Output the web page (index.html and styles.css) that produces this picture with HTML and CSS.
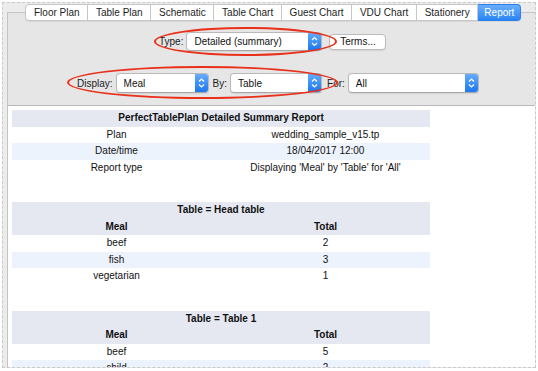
FILE: index.html
```html
<!DOCTYPE html>
<html>
<head>
<meta charset="utf-8">
<link rel="stylesheet" href="styles.css">
</head>
<body>
<div class="frame">
  <div class="tabs">
    <div class="tab first">Floor Plan</div>
    <div class="tab">Table Plan</div>
    <div class="tab">Schematic</div>
    <div class="tab">Table Chart</div>
    <div class="tab">Guest Chart</div>
    <div class="tab">VDU Chart</div>
    <div class="tab">Stationery</div>
    <div class="tab active">Report</div>
  </div>
  <div class="pane">
    <div class="row row-type">
      <span class="lbl">Type:</span>
      <div class="select w-type"><span class="val">Detailed (summary)</span><span class="stepper"><svg width="13" height="17" viewBox="0 0 13 17"><path d="M4 7 L6.5 4.5 L9 7 M4 10 L6.5 12.5 L9 10" fill="none" stroke="#fff" stroke-width="1.2"/></svg></span></div>
      <div class="button">Terms...</div>
    </div>
    <div class="row row-display">
      <span class="lbl">Display:</span>
      <div class="select w-meal"><span class="val">Meal</span><span class="stepper"><svg width="13" height="18" viewBox="0 0 13 18"><path d="M4 7.5 L6.5 5 L9 7.5 M4 10.5 L6.5 13 L9 10.5" fill="none" stroke="#fff" stroke-width="1.2"/></svg></span></div>
      <span class="lbl lbl-by">By:</span>
      <div class="select w-table"><span class="val">Table</span><span class="stepper"><svg width="13" height="18" viewBox="0 0 13 18"><path d="M4 7.5 L6.5 5 L9 7.5 M4 10.5 L6.5 13 L9 10.5" fill="none" stroke="#fff" stroke-width="1.2"/></svg></span></div>
      <span class="lbl lbl-for">For:</span>
      <div class="select w-all"><span class="val">All</span><span class="stepper"><svg width="13" height="18" viewBox="0 0 13 18"><path d="M4 7.5 L6.5 5 L9 7.5 M4 10.5 L6.5 13 L9 10.5" fill="none" stroke="#fff" stroke-width="1.2"/></svg></span></div>
    </div>
    <div class="report">
      <table class="rt">
        <tr class="hd"><td colspan="2" class="b">PerfectTablePlan Detailed Summary Report</td></tr>
        <tr><td>Plan</td><td>wedding_sample_v15.tp</td></tr>
        <tr class="alt"><td>Date/time</td><td>18/04/2017 12:00</td></tr>
        <tr><td>Report type</td><td>Displaying 'Meal' by 'Table' for 'All'</td></tr>
      </table>
      <table class="rt">
        <tr class="hd"><td colspan="2" class="b">Table = Head table</td></tr>
        <tr class="hd"><td class="b">Meal</td><td class="b">Total</td></tr>
        <tr><td>beef</td><td>2</td></tr>
        <tr class="alt"><td>fish</td><td>3</td></tr>
        <tr><td>vegetarian</td><td>1</td></tr>
      </table>
      <table class="rt">
        <tr class="hd"><td colspan="2" class="b">Table = Table 1</td></tr>
        <tr class="hd"><td class="b">Meal</td><td class="b">Total</td></tr>
        <tr><td>beef</td><td>5</td></tr>
        <tr class="alt"><td>child</td><td>2</td></tr>
      </table>
    </div>
  </div>
  <div class="ring ring-type"></div>
  <div class="ring ring-display"></div>
</div>
</body>
</html>
```

FILE: styles.css
```css
* { box-sizing: border-box; }
html, body { margin: 0; padding: 0; background: #ffffff; }
body {
  font-family: "Liberation Sans", Arial, sans-serif;
  font-size: 10px;
  color: #111;
}
.frame {
  position: relative;
  margin: 2px;
  width: 534px;
  height: 366px;
  border: 1px dashed #c9c9c9;
  background: #ececec;
  overflow: hidden;
}
.tabs {
  position: relative;
  z-index: 1;
  display: flex;
  margin-top: 1px;
  padding-left: 22px;
  height: 17px;
}
.tab {
  height: 17px;
  line-height: 16px;
  padding: 0 7.7px;
  background: #fff;
  border: 1px solid #c6c6c6;
  border-left: none;
  color: #1d1d1d;
  white-space: nowrap;
  box-shadow: 0 1px 0 rgba(0,0,0,0.06);
}
.tab.first { border-left: 1px solid #c6c6c6; border-radius: 4px 0 0 4px; padding-left: 8px; }
.tab.active {
  background: linear-gradient(#69aefb, #2b85f6);
  border-color: #2a7ff0;
  color: #fff;
  border-radius: 0 4px 4px 0;
  padding: 0 6px;
}
.pane {
  margin-top: -9px;
  margin-left: 4px;
  width: 540px;
  height: 360px;
  border: 1px solid #c4c4c4;
  border-right: none;
  background: #e6e6e6;
}
.row {
  display: flex;
  align-items: center;
}
.row-type { margin-top: 19px; height: 19px; padding-left: 151px; }
.row-display { margin-top: 22px; height: 20px; padding-left: 69px; }
.lbl { color: #1a1a1a; white-space: nowrap; }
.select {
  position: relative;
  display: flex;
  align-items: center;
  height: 100%;
  margin-left: 3px;
  background: #fff;
  border: 1px solid #b9b9b9;
  border-bottom-color: #a9a9a9;
  border-radius: 4px;
  padding-left: 7px;
  box-shadow: 0 1px 1px rgba(0,0,0,0.08);
}
.select .val { flex: 1; white-space: nowrap; }
.stepper {
  display: block;
  width: 13px;
  height: 100%;
  background: linear-gradient(#64abfb, #1b77f1);
  border-radius: 0 3px 3px 0;
}
.stepper svg { display: block; }
.w-type { width: 136px; }
.w-meal { width: 93px; }
.w-table { width: 92px; }
.w-all { width: 131px; }
.lbl-by { margin-left: 4px; }
.lbl-for { margin-left: 5px; }
.button {
  margin-left: 7px;
  height: 16px;
  width: 57px;
  line-height: 14px;
  text-align: center;
  background: #fff;
  border: 1px solid #bcbcbc;
  border-radius: 4px;
  box-shadow: 0 1px 1px rgba(0,0,0,0.08);
}
.report {
  margin-top: 12px;
  height: 280px;
  background: #fff;
  border-top: 1px solid #b8b8b8;
  padding: 4px 0 0 4px;
}
.rt {
  width: 418px;
  border-collapse: collapse;
  table-layout: fixed;
  margin-bottom: 26px;
}
.rt td {
  height: 16.5px;
  padding: 0;
  text-align: center;
  white-space: nowrap;
  line-height: 16px;
  color: #111;
}
.rt tr.hd td { background: #e5e8f1; }
.rt tr.alt td { background: #edf3fd; }
.rt td.b { font-weight: bold; }
.ring {
  position: absolute;
  border: 2px solid #e8301a;
  border-radius: 50%;
}
.ring-type { left: 151px; top: 24px; width: 183px; height: 29px; }
.ring-display { left: 64px; top: 63px; width: 271px; height: 33px; }
```
